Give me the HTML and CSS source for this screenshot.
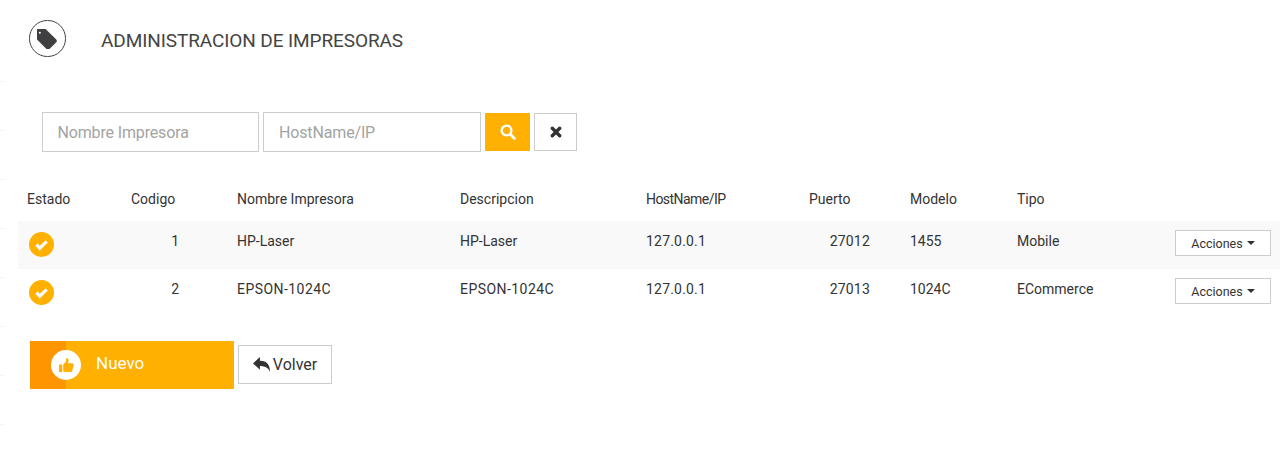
FILE: index.html
```html
<!DOCTYPE html>
<html lang="es">
<head>
<meta charset="utf-8">
<title>Administracion de impresoras</title>
<link rel="stylesheet" href="styles.css">
</head>
<body>
<div class="ticks"><i></i><i></i><i></i><i></i><i></i><i></i><i></i><i></i></div>
<header class="head">
  <span class="head-icon">
    <svg viewBox="64 192 1400 1400" width="20" height="20"><path fill="#3f3f41" fill-rule="evenodd" d="M1451 1024q0 53-37 90l-491 492q-39 37-91 37-53 0-90-37l-715-716q-38-37-64.500-101t-26.500-117v-416q0-52 38-90t90-38h416q53 0 117 26.500t102 64.500l715 714q37 39 37 91zM330 448a70 70 0 1 0-140 0a70 70 0 1 0 140 0z"/></svg>
  </span>
  <h1 class="title">ADMINISTRACION DE IMPRESORAS</h1>
</header>
<form class="filters">
  <input class="field" type="text" placeholder="Nombre Impresora">
  <input class="field field-b" type="text" placeholder="HostName/IP">
  <button class="btn-search" type="button" aria-label="Buscar">
    <svg viewBox="0 0 16 16" width="16" height="16"><circle cx="6.500" cy="6.500" r="4.900" fill="none" stroke="#fff" stroke-width="2.400"/><path d="M10.300 10.300l4.200 4.200" stroke="#fff" stroke-width="2.800" stroke-linecap="round"/></svg>
  </button>
  <button class="btn-clear" type="button" aria-label="Limpiar">
    <svg viewBox="0 0 12 12" width="12" height="12"><path d="M2.300 2.300l7.400 7.400M9.700 2.300l-7.400 7.400" stroke="#333" stroke-width="3.400" stroke-linecap="round"/></svg>
  </button>
</form>
<table class="grid">
  <thead>
    <tr><th class="c1">Estado</th><th class="c2">Codigo</th><th class="c3">Nombre Impresora</th><th class="c4">Descripcion</th><th class="c5 narrow">HostName/IP</th><th class="c6">Puerto</th><th class="c7">Modelo</th><th class="c8">Tipo</th><th class="c9"></th></tr>
  </thead>
  <tbody>
    <tr class="odd">
      <td class="c1"><span class="ok"><svg viewBox="0 0 14 14" width="15" height="15"><path d="M2.200 7.200l3.200 3.200 6.400-6.400" fill="none" stroke="#fff" stroke-width="3"/></svg></span></td>
      <td class="c2 num">1</td><td>HP-Laser</td><td>HP-Laser</td><td class="ip">127.0.0.1</td><td class="c6 num">27012</td><td>1455</td><td>Mobile</td>
      <td class="c9"><button class="btn-act" type="button">Acciones<span class="caret"></span></button></td>
    </tr>
    <tr>
      <td class="c1"><span class="ok"><svg viewBox="0 0 14 14" width="15" height="15"><path d="M2.200 7.200l3.200 3.200 6.400-6.400" fill="none" stroke="#fff" stroke-width="3"/></svg></span></td>
      <td class="c2 num">2</td><td class="wide">EPSON-1024C</td><td class="wide">EPSON-1024C</td><td class="ip">127.0.0.1</td><td class="c6 num">27013</td><td>1024C</td><td>ECommerce</td>
      <td class="c9"><button class="btn-act" type="button">Acciones<span class="caret"></span></button></td>
    </tr>
  </tbody>
</table>
<div class="actions">
  <button class="btn-new" type="button">
    <span class="new-side"></span>
    <span class="new-icon"><svg viewBox="0 0 18 18" width="17" height="17"><path fill="#ffb000" d="M1 8h3.500v8H1zM5.500 8.200L8.500 4.500V1.300c1.500-.3 2.700.7 2.700 2.300 0 1-.3 2-.7 3h4.500c1.200 0 1.900 1 1.600 2l-1.500 6c-.2.800-.9 1.400-1.800 1.400H7.500c-.8 0-1.400-.3-2-.8z"/></svg></span>
    <span class="new-label">Nuevo</span>
  </button>
  <button class="btn-back" type="button">
    <svg viewBox="1 1 16 14" width="17" height="15"><path fill="#333" d="M7.500 1v3.500c5.500 0 9.500 2.500 9.500 10.500-1.500-3.500-4.500-5.500-9.500-5.500V13L1 7z"/></svg>
    <span>Volver</span>
  </button>
</div>
</body>
</html>
```
FILE: styles.css
```css
* { box-sizing: border-box; }
html, body { margin: 0; padding: 0; background: #fff; }
body { width: 1285px; height: 458px; overflow: hidden; font-family: Roboto, "Liberation Sans", sans-serif; color: #333; font-size: 14px; position: relative; }
.ticks { position: absolute; left: 0; top: 81px; display: flex; flex-direction: column; gap: 48px; }
.ticks i { display: block; width: 5px; height: 1px; background: #f6f6f6; }
.head { display: flex; align-items: center; height: 37px; margin: 20px 0 0 29px; }
.head-icon { width: 36.500px; height: 36.500px; border: 1px solid #444; border-radius: 50%; display: flex; align-items: center; justify-content: center; flex: none; }
.title { margin: 3px 0 0 35.500px; font-size: 19px; font-weight: 400; color: #444; letter-spacing: -0.1px; }
.filters { display: flex; align-items: center; margin: 55px 0 0 42px; height: 40px; }
.field { width: 217px; height: 40px; border: 1px solid #ccc; padding: 0 14.500px; font: 400 16px Roboto, sans-serif; letter-spacing: -0.15px; color: #333; outline: 0; background: #fff; border-radius: 0; }
.field::placeholder { color: #a3a3a3; opacity: 1; }
.field-b { width: 218px; margin-left: 4px; padding: 0 15px; }
.btn-search { width: 45px; height: 38px; margin-left: 4px; border: 0; background: #ffb000; display: flex; align-items: center; justify-content: center; padding: 0; }
.btn-clear { width: 43px; height: 38px; margin-left: 4px; border: 1px solid #ccc; background: #fff; display: flex; align-items: center; justify-content: center; padding: 0; }
.grid { border-collapse: collapse; table-layout: fixed; width: 1262px; margin: 26px 0 0 18px; font-size: 14px; }
.grid th { height: 43px; padding: 0 0 1px 9px; text-align: left; font-weight: 400; vertical-align: middle; }
.grid td { height: 48px; padding: 0 0 8px 9px; vertical-align: middle; }
.grid .odd { background: #f9f9f9; }
.c1 { width: 104px; } .c2 { width: 106px; } .c3 { width: 223px; } .c4 { width: 186px; } .c5 { width: 163px; } .c6 { width: 101px; } .c7 { width: 107px; } .c8 { width: 149px; } .c9 { width: 123px; }
.grid th.narrow { letter-spacing: -0.55px; }
.grid td.wide { letter-spacing: 0.45px; }
.grid td.ip { letter-spacing: 0.2px; }
.grid td.num { text-align: right; }
.grid td.c2 { padding-right: 49px; }
.grid td.c6 { padding-right: 31px; letter-spacing: 0.2px; }
.grid td.c1 { padding: 0 0 2px 11px; }
.grid td.c9 { padding: 0 0 4px 18px; }
.ok { width: 25px; height: 25px; border-radius: 50%; background: #ffb000; display: flex; align-items: center; justify-content: center; }
.btn-act { width: 96px; height: 26px; border: 1px solid #ccc; background: #fff; font: 400 12.500px Roboto, sans-serif; color: #333; padding: 0; display: flex; align-items: center; justify-content: center; }
.caret { width: 0; height: 0; margin-left: 4px; border-top: 4px solid #333; border-left: 4px solid transparent; border-right: 4px solid transparent; }
.actions { display: flex; align-items: flex-start; margin: 24px 0 0 30px; }
.btn-new { width: 204px; height: 48px; border: 0; background: #ffb000; display: flex; align-items: center; padding: 0; color: #fff; font: 400 17px Roboto, sans-serif; position: relative; }
.new-side { position: absolute; left: 0; top: 0; bottom: 0; width: 36px; background: #ff9500; }
.new-icon { position: relative; width: 30px; height: 30px; margin-left: 21px; background: #fff; border-radius: 50%; display: flex; align-items: center; justify-content: center; }
.new-label { margin-left: 15px; position: relative; top: -2px; }
.btn-back { width: 94px; height: 39px; margin: 4px 0 0 4px; border: 1px solid #ccc; background: #fff; display: flex; align-items: center; justify-content: center; gap: 3px; padding: 0; font: 400 16px Roboto, sans-serif; color: #333; }
```
